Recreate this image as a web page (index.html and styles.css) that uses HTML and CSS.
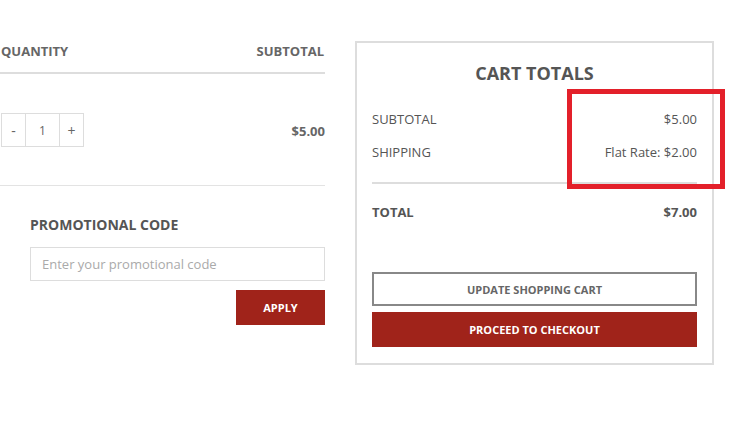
FILE: index.html
```html
<!DOCTYPE html>
<html lang="en">
  <head>
    <meta charset="UTF-8" />
    <meta name="viewport" content="width=device-width, initial-scale=1.0" />
    <title>Shopping Cart</title>
    <link rel="stylesheet" href="styles.css">
  </head>
  <body>
    <div class="cart">
      <div class="cart-items">
        <div class="cart-head">
          <span>QUANTITY</span>
          <span>SUBTOTAL</span>
        </div>
        <div class="cart-row">
          <div class="qty">
            <button class="qty-btn">-</button>
            <span class="qty-value">1</span>
            <button class="qty-btn">+</button>
          </div>
          <span class="row-total">$5.00</span>
        </div>
        <div class="promo">
          <h3 class="promo-title">PROMOTIONAL CODE</h3>
          <input class="promo-input" type="text" placeholder="Enter your promotional code" />
          <div class="promo-actions">
            <button class="btn btn-red btn-apply">APPLY</button>
          </div>
        </div>
      </div>

      <div class="totals">
        <h2 class="totals-title">CART TOTALS</h2>
        <div class="totals-row">
          <span>SUBTOTAL</span>
          <span>$5.00</span>
        </div>
        <div class="totals-row">
          <span>SHIPPING</span>
          <span>Flat Rate: $2.00</span>
        </div>
        <div class="totals-row totals-grand">
          <span>TOTAL</span>
          <span>$7.00</span>
        </div>
        <button class="btn btn-outline">UPDATE SHOPPING CART</button>
        <button class="btn btn-red btn-checkout">PROCEED TO CHECKOUT</button>
      </div>
    </div>

    <!-- highlight box drawn over the screenshot -->
    <div class="highlight"></div>
  </body>
</html>
```

FILE: styles.css
```css
body {
  margin: 0;
  background: #fff;
  font-family: "Open Sans", "Liberation Sans", sans-serif;
  color: #555;
}
.cart {
  display: flex;
  gap: 30px;
  align-items: flex-start;
}
.cart-items {
  width: 325px;
}
.cart-head {
  display: flex;
  justify-content: space-between;
  padding: 42px 1px 12px 1px;
  line-height: 18px;
  font-size: 13px;
  font-weight: 700;
  color: #666;
  border-bottom: 2px solid #ddd;
}
.cart-row {
  height: 112px;
  box-sizing: border-box;
  display: flex;
  align-items: center;
  justify-content: space-between;
  border-bottom: 1px solid #e3e3e3;
}
.qty {
  display: flex;
  margin-left: 1px;
  margin-top: 1px;
  height: 34px;
  box-sizing: border-box;
  border: 1px solid #ddd;
}
.qty-btn {
  width: 23px;
  padding: 0;
  border: 0;
  background: #fff;
  font-family: inherit;
  font-size: 14px;
  color: #666;
}
.qty-value {
  width: 33px;
  border-left: 1px solid #ddd;
  border-right: 1px solid #ddd;
  display: flex;
  align-items: center;
  justify-content: center;
  font-size: 12px;
  color: #666;
}
.row-total {
  font-size: 13px;
  font-weight: 700;
  color: #666;
  padding-top: 2px;
}
.promo {
  padding-left: 30px;
}
.promo-title {
  margin: 29px 0 12px 0;
  font-size: 14px;
  line-height: 20px;
  color: #555;
}
.promo-input {
  display: block;
  width: 100%;
  height: 34px;
  box-sizing: border-box;
  border: 1px solid #ddd;
  padding: 0 11px;
  font-family: inherit;
  font-size: 13px;
  outline: none;
}
.promo-input::placeholder {
  color: #aaa;
}
.promo-actions {
  display: flex;
  justify-content: flex-end;
  margin-top: 9px;
}
.btn {
  display: block;
  box-sizing: border-box;
  font-family: inherit;
  font-size: 11px;
  font-weight: 700;
  cursor: pointer;
}
.btn-red {
  background: #a0231a;
  border: 0;
  color: #fff;
}
.btn-apply {
  width: 89px;
  height: 35px;
}
.totals {
  width: 359px;
  box-sizing: border-box;
  margin-top: 41px;
  border: 2px solid #ddd;
  padding: 18px 15px 16px 15px;
}
.totals-title {
  margin: 0 0 18px 0;
  text-align: center;
  font-size: 18px;
  line-height: 24px;
  color: #555;
}
.totals-row {
  display: flex;
  justify-content: space-between;
  line-height: 33px;
  font-size: 13px;
  color: #555;
}
.totals-grand {
  margin-top: 13px;
  border-top: 2px solid #ddd;
  padding-top: 12px;
  font-weight: 700;
}
.btn-outline {
  width: 100%;
  height: 34px;
  margin-top: 43px;
  background: #fff;
  border: 2px solid #888;
  color: #666;
}
.btn-checkout {
  width: 100%;
  height: 35px;
  margin-top: 6px;
}
.highlight {
  position: absolute;
  left: 567px;
  top: 89px;
  width: 158px;
  height: 100px;
  box-sizing: border-box;
  border: 5px solid #e3202a;
}
```
